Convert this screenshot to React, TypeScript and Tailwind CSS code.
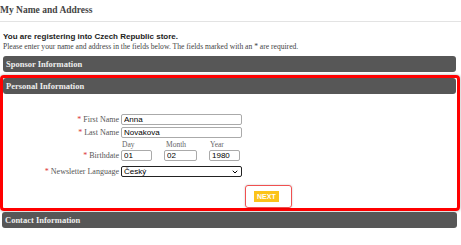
import { ChevronDown } from 'lucide-react';

const serif = { fontFamily: '"Liberation Serif", "Times New Roman", serif' };

function Bar({ title }: { title: string }) {
  return (
    <div className="h-[16px] rounded-[3px] bg-[#575757] px-[3px] flex items-center">
      <span className="text-[8.5px] font-bold text-[#eeeeee] leading-none" style={serif}>
        {title}
      </span>
    </div>
  );
}

function Label({ text }: { text: string }) {
  return (
    <div className="text-right text-[8px] text-[#555] leading-none pr-[2px]" style={serif}>
      <span className="text-[#d33] mr-[2px]">*</span>
      {text}
    </div>
  );
}

const inputCls =
  'h-[11px] border border-[#aaa] rounded-[2px] px-[2px] text-[8px] text-black outline-none';

export default function App() {
  return (
    <div className="w-[461px] h-[245px] bg-white overflow-hidden font-['Liberation_Sans',Arial,sans-serif]">
      {/* Title */}
      <div className="h-[22px] border-b border-[#e3e3e3] flex items-center">
        <h1 className="text-[9.5px] font-bold text-[#444] leading-none" style={serif}>
          My Name and Address
        </h1>
      </div>

      <div className="px-[3px] pt-[10px]">
        <p className="text-[8px] font-bold text-[#222] leading-[10px]">
          You are registering into Czech Republic store.
        </p>
        <p className="text-[7.6px] text-[#444] leading-[10px]" style={serif}>
          Please enter your name and address in the fields below. The fields marked with an * are required.
        </p>
      </div>

      <div className="pl-[3px] pr-[5px] mt-[4px]">
        <Bar title="Sponsor Information" />
      </div>

      {/* Personal information - highlighted */}
      <div className="mt-[3px] mr-[1px] border-[3px] border-[#ff0000] rounded-[4px] shadow-[0_0_3px_rgba(0,0,0,0.35)]">
        <div className="pr-[1px]">
          <Bar title="Personal Information" />
        </div>

        <div className="pt-[20px] grid grid-cols-[118px_1fr] gap-y-[2px] items-center">
          <Label text="First Name" />
          <input defaultValue="Anna" className={`w-[121px] ${inputCls}`} />
          <Label text="Last Name" />
          <input defaultValue="Novakova" className={`w-[121px] ${inputCls}`} />
          <div />
          <div className="flex text-[7.5px] text-[#666] leading-none h-[8px] items-end" style={serif}>
            <span className="w-[45px] pl-[1px]">Day</span>
            <span className="w-[44px]">Month</span>
            <span>Year</span>
          </div>
          <Label text="Birthdate" />
          <div className="flex">
            <input defaultValue="01" className={`w-[31px] ${inputCls}`} />
            <input defaultValue="02" className={`ml-[12px] w-[33px] ${inputCls}`} />
            <input defaultValue="1980" className={`ml-[12px] w-[31px] ${inputCls}`} />
          </div>
          <div className="mt-[3px]">
            <Label text="Newsletter Language" />
          </div>
          <div className="mt-[3px] w-[121px] h-[11px] border border-[#222] rounded-[2px] flex items-center justify-between px-[2px]">
            <span className="text-[8px] text-black leading-none">Český</span>
            <ChevronDown size={8} strokeWidth={3} className="text-black" />
          </div>
        </div>

        <div className="flex pt-[8px] pl-[242px]">
          <div className="border border-[#f05050] rounded-[3px] pl-[8px] pr-[12px] py-[5px] shadow-[0_0_2px_rgba(0,0,0,0.25)]">
            <button className="block bg-[#fbc31a] text-white text-[7px] font-bold px-[3px] h-[11px] leading-[11px]">
              NEXT
            </button>
          </div>
        </div>
      </div>

      <div className="pl-[2px] pr-[4px] mt-[1px]">
        <Bar title="Contact Information" />
      </div>
    </div>
  );
}
